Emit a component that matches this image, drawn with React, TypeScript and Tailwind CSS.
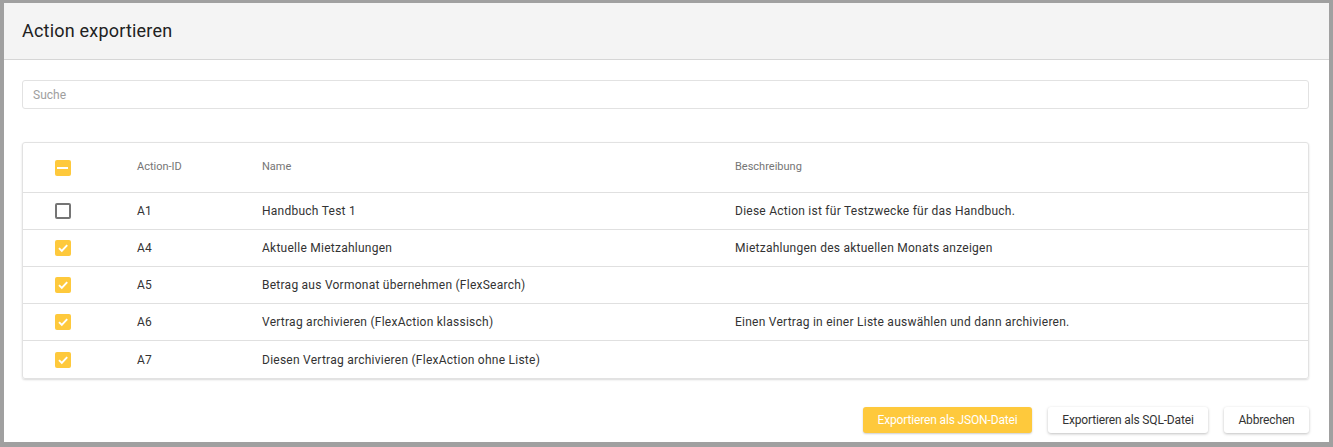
import React, { useState } from 'react';

interface ActionRow {
  id: string;
  name: string;
  description: string;
  checked: boolean;
}

const initialRows: ActionRow[] = [
  { id: 'A1', name: 'Handbuch Test 1', description: 'Diese Action ist für Testzwecke für das Handbuch.', checked: false },
  { id: 'A4', name: 'Aktuelle Mietzahlungen', description: 'Mietzahlungen des aktuellen Monats anzeigen', checked: true },
  { id: 'A5', name: 'Betrag aus Vormonat übernehmen (FlexSearch)', description: '', checked: true },
  { id: 'A6', name: 'Vertrag archivieren (FlexAction klassisch)', description: 'Einen Vertrag in einer Liste auswählen und dann archivieren.', checked: true },
  { id: 'A7', name: 'Diesen Vertrag archivieren (FlexAction ohne Liste)', description: '', checked: true },
];

const Checkbox: React.FC<{ state: 'on' | 'off' | 'some'; onClick?: () => void }> = ({ state, onClick }) => {
  if (state === 'off') {
    return (
      <button onClick={onClick} className="w-4 h-4 rounded-[2px] border-2 border-[#757575] bg-white" />
    );
  }
  return (
    <button onClick={onClick} className="w-4 h-4 rounded-[2px] bg-[#fec93c] flex items-center justify-center">
      {state === 'on' ? (
        <svg width="12" height="12" viewBox="0 0 12 12" fill="none">
          <path d="M2 6.2 L4.8 9 L10.2 3.2" stroke="white" strokeWidth="1.9" />
        </svg>
      ) : (
        <div className="w-[11px] h-[2px] bg-white" />
      )}
    </button>
  );
};

const App: React.FC = () => {
  const [rows, setRows] = useState(initialRows);
  const [search, setSearch] = useState('');

  const toggle = (id: string) =>
    setRows(rows.map((r) => (r.id === id ? { ...r, checked: !r.checked } : r)));

  const allChecked = rows.every((r) => r.checked);
  const noneChecked = rows.every((r) => !r.checked);

  return (
    <div
      className="w-[1333px] h-[447px] bg-[#a0a0a0] pt-[3px] pl-[4px] pr-[4px] pb-[5px]"
      style={{ fontFamily: 'Roboto, "Liberation Sans", sans-serif' }}
    >
      <div className="h-full bg-white flex flex-col">
        <div className="h-[57px] bg-[#f4f4f4] border-b border-[#d6d6d6] flex items-center pl-[18px] pb-[1px]">
          <h2 className="text-[18px] text-[#212121] tracking-[0.2px]">Action exportieren</h2>
        </div>

        <div className="pl-[18px] pr-[20px] pt-[20px]">
          <input
            value={search}
            onChange={(e) => setSearch(e.target.value)}
            placeholder="Suche"
            className="w-full h-[29px] border border-[#e2e2e2] rounded-[3px] px-[10px] text-[12px] text-[#333] placeholder:text-[#9e9e9e] outline-none"
          />

          <div className="mt-[33px] border border-[#e2e2e2] rounded-[3px] shadow-[0_1px_2px_rgba(0,0,0,0.15)] text-[12px] tracking-[0.25px]">
            <div className="h-[50px] flex items-center border-b border-[#e0e0e0] text-[11px] text-[#757575] tracking-normal">
              <div className="w-[78px] flex justify-center pl-[1px]">
                <Checkbox
                  state={allChecked ? 'on' : noneChecked ? 'off' : 'some'}
                  onClick={() => setRows(rows.map((r) => ({ ...r, checked: !allChecked })))}
                />
              </div>
              <div className="w-[125px] pl-[36px]">Action-ID</div>
              <div className="w-[473px] pl-[36px]">Name</div>
              <div className="pl-[36px]">Beschreibung</div>
            </div>
            {rows.map((r, i) => (
              <div
                key={r.id}
                className={`h-[37px] flex items-center text-[#333] ${i < rows.length - 1 ? 'border-b border-[#e0e0e0]' : ''}`}
              >
                <div className="w-[78px] flex justify-center pl-[1px]">
                  <Checkbox state={r.checked ? 'on' : 'off'} onClick={() => toggle(r.id)} />
                </div>
                <div className="w-[125px] pl-[36px]">{r.id}</div>
                <div className="w-[473px] pl-[36px]">{r.name}</div>
                <div className="pl-[36px]">{r.description}</div>
              </div>
            ))}
          </div>
        </div>

        <div className="mt-auto mb-[9px] pr-[20px] flex justify-end gap-[16px] text-[12px] tracking-[-0.15px]">
          <button className="h-[26px] w-[169px] rounded-[3px] bg-[#fec93c] text-white shadow-[0_1px_2px_rgba(0,0,0,0.2)]">
            Exportieren als JSON-Datei
          </button>
          <button className="h-[26px] w-[160px] rounded-[3px] bg-white text-[#333] shadow-[0_1px_3px_rgba(0,0,0,0.25)]">
            Exportieren als SQL-Datei
          </button>
          <button className="h-[26px] w-[85px] rounded-[3px] bg-white text-[#333] shadow-[0_1px_3px_rgba(0,0,0,0.25)]">
            Abbrechen
          </button>
        </div>
      </div>
    </div>
  );
};

export default App;
